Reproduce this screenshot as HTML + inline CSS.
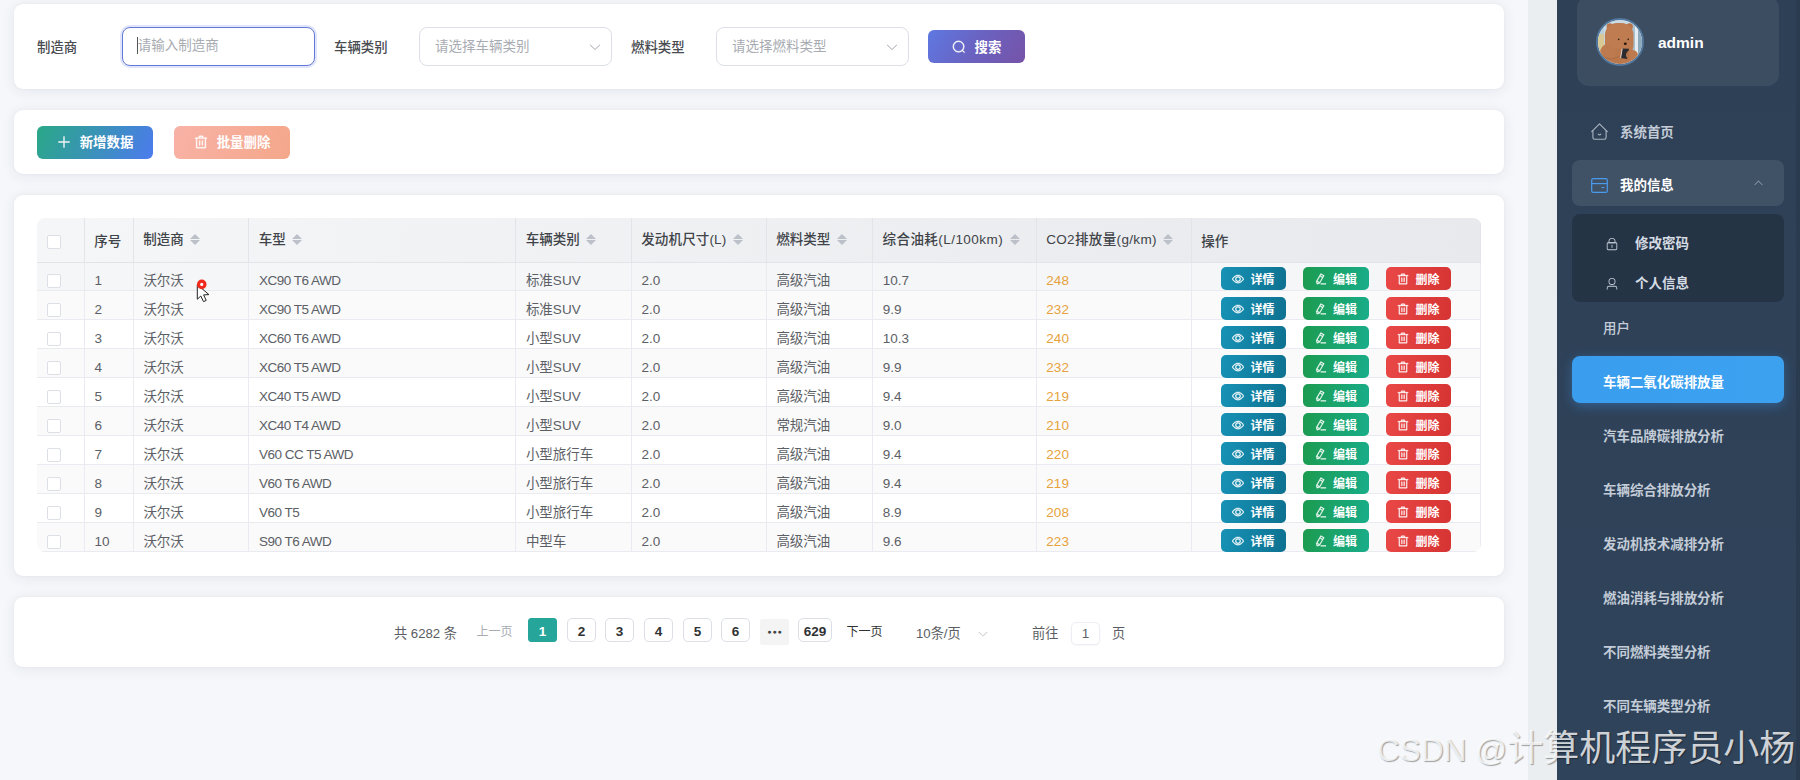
<!DOCTYPE html>
<html lang="zh-CN">
<head>
<meta charset="utf-8">
<title>车辆二氧化碳排放量</title>
<style>
*{box-sizing:border-box;margin:0;padding:0}
html,body{width:1800px;height:780px;overflow:hidden}
body{position:relative;background:#f5f7fa;font-family:"Liberation Sans","Noto Sans CJK SC",sans-serif;font-size:14px;color:#606266}
.card{position:absolute;left:14px;width:1490px;background:#fff;border-radius:9px;box-shadow:0 2px 14px rgba(50,60,90,.085),0 0 3px rgba(50,60,90,.05)}
#c1{top:4px;height:85px}
#c2{top:110px;height:64px}
#c3{top:195px;height:381px}
#c4{top:597px;height:69.5px}
.scroll{position:absolute;left:1528px;top:0;width:29px;height:780px;background:#ebeef0}
/* search form */
.lbl{position:absolute;top:29px;height:30px;line-height:30px;font-weight:500;color:#484b50;font-size:13.4px;white-space:nowrap}
.inp{position:absolute;top:23px;height:39px;width:193px;border:1px solid #dcdfe6;border-radius:8px;background:#fff;line-height:37px;padding-left:15px;color:#a8abb2;font-size:13.5px;white-space:nowrap}
.inp.focus{border:1.3px solid #6479d3;box-shadow:0 0 0 2px rgba(102,126,234,.2);line-height:36.4px;padding-left:14.7px}
.inp .cur{position:absolute;left:14px;top:9px;width:1px;height:17px;background:#555}
.inp svg{position:absolute;right:9px;top:12px;width:14px;height:14px;color:#a8abb2}
.btn{position:absolute;display:flex;align-items:center;justify-content:center;color:#fff;font-weight:700;font-size:13.4px;border-radius:6px;white-space:nowrap;padding-bottom:2px}
.btn svg{width:14px;height:14px;margin-right:9px;position:relative;top:1px;stroke:currentColor;stroke-width:28}
#bs{left:914px;top:26px;width:97px;height:33px;background:linear-gradient(120deg,#5e78e2 0%,#6a62c0 50%,#7653a8 100%)}
#ba{left:23px;top:16px;width:116px;height:32.5px;background:linear-gradient(115deg,#2aa887 0%,#3a92b8 50%,#4c7bee 100%)}
#bd{left:160px;top:16px;width:116px;height:32.5px;background:linear-gradient(115deg,#f8b2a6 0%,#f4a78a 100%)}
/* table */
table{position:absolute;left:23.2px;top:23.2px;width:1443.8px;border-collapse:separate;border-spacing:0;table-layout:fixed;font-size:14px;border-radius:8px;overflow:hidden}
thead tr{height:45px}
thead{background:linear-gradient(100deg,#f5f6f8 0%,#e7e9ec 100%)}
th{text-align:left;font-weight:500;color:#404348;padding:0 0 4px 9.5px;border-right:1px solid #e2e4e9;border-bottom:1px solid #e2e4e9;white-space:nowrap;height:45px;font-size:13.5px}
td{height:29px;padding:5px 0 0 9.7px;border-right:1px solid #e9ebf0;border-bottom:1px solid #e9ebf0;white-space:nowrap;color:#5c5f66;font-size:13.5px;background:#fff}
tr.stripe td{background:#fafafa}
tr.hover td{background:#f5f6f8}
td.co2{color:#e6a23c}
th.ns{padding-bottom:0}
th.c0{padding-bottom:0;padding-left:10px}
th.c0 .cb{top:1.5px}
td.c0{padding-left:10px}
td.c0 .cb{top:2px}
td.l{padding-top:8px}
td.m{letter-spacing:-.5px}
tr.hover td.l{padding-top:7px}
tr.hover td{height:28px;padding-top:4px}
.cb{display:inline-block;width:14px;height:14px;border:1px solid #dcdfe6;border-radius:2px;background:#fff;vertical-align:middle;position:relative;top:1px}
.caret{display:inline-block;position:relative;width:10px;height:14px;vertical-align:middle;margin-left:6.5px;top:-1px}
.caret:before,.caret:after{content:"";position:absolute;left:0;border:5px solid transparent}
.caret:before{border-bottom-color:#bcc0c8;top:-3.5px}
.caret:after{border-top-color:#bcc0c8;top:7.5px}
td.ops{padding:0 0 0 29px !important;font-size:0;vertical-align:bottom}
.ab{display:inline-flex;align-items:center;justify-content:center;width:65.5px;height:23px;border-radius:5px;color:#fff;font-size:12px;font-weight:700;margin-right:17px;vertical-align:middle;position:relative;top:0}
tbody tr:not(.hover) .ab{top:1px}
.ab .bi{width:12px;height:12px;margin-right:6px;stroke:currentColor;stroke-width:30}
.a1{background:linear-gradient(100deg,#1792b6 0%,#0e7190 100%)}
.a2{background:linear-gradient(100deg,#1c9b4f 0%,#19ad8a 100%)}
.a3{background:linear-gradient(100deg,#ea4747 0%,#d63333 100%)}
/* pagination */
.pg{position:absolute;top:2.5px;height:68px;line-height:68px;white-space:nowrap;font-size:13.2px;color:#5a5d63}
.pg.sm{font-size:12px;top:0.5px}
.pn{position:absolute;top:21.3px;height:23.4px;width:29px;border:1px solid #dcdfe6;border-radius:5px;text-align:center;line-height:25.5px;font-weight:700;color:#303133;font-size:13.5px;background:#fff}
.pn.on{background:#26a69a;border-color:#26a69a;color:#fff;border-radius:3px}
.pn.more{background:#f4f4f5;border-color:#f4f4f5;height:25.5px;top:22px;line-height:24px;border-radius:2px;font-size:7px;letter-spacing:1px;color:#444;padding-left:1px}
/* sidebar */
.side{position:absolute;left:1557px;top:0;width:243px;height:780px;background:linear-gradient(180deg,#2e4056 0%,#2f435a 100%);color:#c8d0da;overflow:hidden}
.side .edge{position:absolute;right:0;top:0;width:4px;height:780px;background:#2a3b50}
.user{position:absolute;left:20px;top:-4px;width:202px;height:90px;border-radius:12px;background:rgba(255,255,255,.07)}
.avatar svg{display:block}
.avatar{position:absolute;left:19.3px;top:22.4px;width:48px;height:48px;border-radius:50%;border:2px solid #53789d;overflow:hidden;background:#c9d6df}
.uname{position:absolute;left:81px;top:36px;font-weight:700;color:#fff;font-size:15.5px;line-height:22px}
.mi{position:absolute;left:15px;width:212px;height:46px;border-radius:8px;line-height:46px;font-weight:700;font-size:13.45px;color:#c3ccd7;white-space:nowrap;padding-left:31px}
.mi svg{position:absolute;width:17px;height:17px;top:14px}
.mi.open{background:rgba(255,255,255,.09);color:#fff;line-height:52px}
.mi.act{background:linear-gradient(90deg,#3a9dee 0%,#3ca2f0 100%);color:#fff;box-shadow:0 3px 12px rgba(64,158,255,.35);line-height:54px;height:46.5px}
.sub{position:absolute;left:15px;top:213.5px;width:212px;height:88.2px;border-radius:8px;background:rgba(0,0,0,.2)}
.si{position:absolute;left:0;width:212px;height:40px;line-height:40px;padding-left:63px;font-weight:700;font-size:13.5px;color:#d5dbe3;white-space:nowrap}
.si svg{position:absolute;left:33px;top:13px;width:14px;height:14px;color:#c3ccd7}
.wm{position:absolute;left:1377px;top:725.5px;font-size:36px;line-height:46px;color:rgba(255,255,255,.78);text-shadow:1px 1px 1px rgba(0,0,0,.35);white-space:nowrap;font-family:"Liberation Sans","Noto Sans CJK SC",sans-serif;letter-spacing:0}
</style>
</head>
<body>

<div class="card" id="c1">
  <div class="lbl" style="left:23px">制造商</div>
  <div class="inp focus" style="left:108px"><span class="cur"></span>请输入制造商</div>
  <div class="lbl" style="left:320px">车辆类别</div>
  <div class="inp" style="left:405px">请选择车辆类别<svg viewBox="0 0 1024 1024"><path fill="currentColor" d="M831.872 340.864 512 652.672 192.128 340.864a30.592 30.592 0 0 0-42.752 0 29.120 29.120 0 0 0 0 41.600L489.664 714.240a32 32 0 0 0 44.672 0l340.288-331.712a29.120 29.120 0 0 0 0-41.728 30.592 30.592 0 0 0-42.752 0z"/></svg></div>
  <div class="lbl" style="left:617px">燃料类型</div>
  <div class="inp" style="left:702px">请选择燃料类型<svg viewBox="0 0 1024 1024"><path fill="currentColor" d="M831.872 340.864 512 652.672 192.128 340.864a30.592 30.592 0 0 0-42.752 0 29.120 29.120 0 0 0 0 41.600L489.664 714.240a32 32 0 0 0 44.672 0l340.288-331.712a29.120 29.120 0 0 0 0-41.728 30.592 30.592 0 0 0-42.752 0z"/></svg></div>
  <div class="btn" id="bs"><svg viewBox="0 0 1024 1024"><path fill="currentColor" d="m795.904 750.720 124.992 124.928a32 32 0 0 1-45.248 45.248L750.656 795.904a416 416 0 1 1 45.248-45.248zM480 832a352 352 0 1 0 0-704 352 352 0 0 0 0 704"/></svg>搜索</div>
</div>

<div class="card" id="c2">
  <div class="btn" id="ba"><svg viewBox="0 0 1024 1024"><path fill="currentColor" d="M480 480V128a32 32 0 0 1 64 0v352h352a32 32 0 1 1 0 64H544v352a32 32 0 1 1-64 0V544H128a32 32 0 0 1 0-64z"/></svg>新增数据</div>
  <div class="btn" id="bd"><svg class="bi" viewBox="0 0 1024 1024"><path fill="currentColor" d="M160 256H96a32 32 0 0 1 0-64h256V95.936a32 32 0 0 1 32-32h256a32 32 0 0 1 32 32V192h256a32 32 0 1 1 0 64h-64v672a32 32 0 0 1-32 32H192a32 32 0 0 1-32-32zm448-64v-64H416v64zM224 896h576V256H224zm192-128a32 32 0 0 1-32-32V416a32 32 0 0 1 64 0v320a32 32 0 0 1-32 32m192 0a32 32 0 0 1-32-32V416a32 32 0 0 1 64 0v320a32 32 0 0 1-32 32"/></svg>批量删除</div>
</div>

<div class="card" id="c3">
<table>
<colgroup><col style="width:47.5px"><col style="width:49px"><col style="width:115.5px"><col style="width:267px"><col style="width:115.5px"><col style="width:135px"><col style="width:106.3px"><col style="width:163.7px"><col style="width:155px"><col style="width:289.3px"></colgroup>
<thead><tr>
<th class="c0"><span class="cb"></span></th><th class="ns">序号</th><th>制造商<span class="caret"></span></th><th>车型<span class="caret"></span></th><th>车辆类别<span class="caret"></span></th><th style="letter-spacing:.15px">发动机尺寸(L)<span class="caret"></span></th><th>燃料类型<span class="caret"></span></th><th style="letter-spacing:.45px">综合油耗(L/100km)<span class="caret"></span></th><th style="letter-spacing:.35px">CO2排放量(g/km)<span class="caret"></span></th><th class="ns">操作</th>
</tr></thead>
<tbody>
<tr class="hover"><td class="c0"><span class="cb"></span></td><td class="l">1</td><td>沃尔沃</td><td class="l m">XC90 T6 AWD</td><td>标准SUV</td><td class="l">2.0</td><td>高级汽油</td><td class="l">10.7</td><td class="co2 l">248</td><td class="ops"><span class="ab a1"><svg class="bi" viewBox="0 0 1024 1024"><path fill="currentColor" d="M512 160c320 0 512 352 512 352S832 864 512 864 0 512 0 512s192-352 512-352m0 64c-225.280 0-384.128 208.064-436.800 288 52.608 79.872 211.456 288 436.800 288 225.280 0 384.128-208.064 436.800-288-52.608-79.872-211.456-288-436.800-288m0 64a224 224 0 1 1 0 448 224 224 0 0 1 0-448m0 64a160.192 160.192 0 0 0-160 160c0 88.192 71.744 160 160 160s160-71.808 160-160-71.744-160-160-160"/></svg>详情</span><span class="ab a2"><svg class="bi" viewBox="0 0 1024 1024"><path fill="currentColor" d="m199.040 672.640 193.984 112 224-387.968-193.920-112-224 388.032zm-23.872 60.160 32.896 148.288 144.896-45.696zM455.040 229.248l193.920 112 56.704-98.112-193.984-112-56.640 98.112zM104.320 708.800l384-665.024 304.768 175.936L409.152 884.800h.064l-248.448 78.336zm384 254.272v-64h448v64z"/></svg>编辑</span><span class="ab a3"><svg class="bi" viewBox="0 0 1024 1024"><path fill="currentColor" d="M160 256H96a32 32 0 0 1 0-64h256V95.936a32 32 0 0 1 32-32h256a32 32 0 0 1 32 32V192h256a32 32 0 1 1 0 64h-64v672a32 32 0 0 1-32 32H192a32 32 0 0 1-32-32zm448-64v-64H416v64zM224 896h576V256H224zm192-128a32 32 0 0 1-32-32V416a32 32 0 0 1 64 0v320a32 32 0 0 1-32 32m192 0a32 32 0 0 1-32-32V416a32 32 0 0 1 64 0v320a32 32 0 0 1-32 32"/></svg>删除</span></td></tr>
<tr class="stripe"><td class="c0"><span class="cb"></span></td><td class="l">2</td><td>沃尔沃</td><td class="l m">XC90 T5 AWD</td><td>标准SUV</td><td class="l">2.0</td><td>高级汽油</td><td class="l">9.9</td><td class="co2 l">232</td><td class="ops"><span class="ab a1"><svg class="bi" viewBox="0 0 1024 1024"><path fill="currentColor" d="M512 160c320 0 512 352 512 352S832 864 512 864 0 512 0 512s192-352 512-352m0 64c-225.280 0-384.128 208.064-436.800 288 52.608 79.872 211.456 288 436.800 288 225.280 0 384.128-208.064 436.800-288-52.608-79.872-211.456-288-436.800-288m0 64a224 224 0 1 1 0 448 224 224 0 0 1 0-448m0 64a160.192 160.192 0 0 0-160 160c0 88.192 71.744 160 160 160s160-71.808 160-160-71.744-160-160-160"/></svg>详情</span><span class="ab a2"><svg class="bi" viewBox="0 0 1024 1024"><path fill="currentColor" d="m199.040 672.640 193.984 112 224-387.968-193.920-112-224 388.032zm-23.872 60.160 32.896 148.288 144.896-45.696zM455.040 229.248l193.920 112 56.704-98.112-193.984-112-56.640 98.112zM104.320 708.800l384-665.024 304.768 175.936L409.152 884.800h.064l-248.448 78.336zm384 254.272v-64h448v64z"/></svg>编辑</span><span class="ab a3"><svg class="bi" viewBox="0 0 1024 1024"><path fill="currentColor" d="M160 256H96a32 32 0 0 1 0-64h256V95.936a32 32 0 0 1 32-32h256a32 32 0 0 1 32 32V192h256a32 32 0 1 1 0 64h-64v672a32 32 0 0 1-32 32H192a32 32 0 0 1-32-32zm448-64v-64H416v64zM224 896h576V256H224zm192-128a32 32 0 0 1-32-32V416a32 32 0 0 1 64 0v320a32 32 0 0 1-32 32m192 0a32 32 0 0 1-32-32V416a32 32 0 0 1 64 0v320a32 32 0 0 1-32 32"/></svg>删除</span></td></tr>
<tr class=""><td class="c0"><span class="cb"></span></td><td class="l">3</td><td>沃尔沃</td><td class="l m">XC60 T6 AWD</td><td>小型SUV</td><td class="l">2.0</td><td>高级汽油</td><td class="l">10.3</td><td class="co2 l">240</td><td class="ops"><span class="ab a1"><svg class="bi" viewBox="0 0 1024 1024"><path fill="currentColor" d="M512 160c320 0 512 352 512 352S832 864 512 864 0 512 0 512s192-352 512-352m0 64c-225.280 0-384.128 208.064-436.800 288 52.608 79.872 211.456 288 436.800 288 225.280 0 384.128-208.064 436.800-288-52.608-79.872-211.456-288-436.800-288m0 64a224 224 0 1 1 0 448 224 224 0 0 1 0-448m0 64a160.192 160.192 0 0 0-160 160c0 88.192 71.744 160 160 160s160-71.808 160-160-71.744-160-160-160"/></svg>详情</span><span class="ab a2"><svg class="bi" viewBox="0 0 1024 1024"><path fill="currentColor" d="m199.040 672.640 193.984 112 224-387.968-193.920-112-224 388.032zm-23.872 60.160 32.896 148.288 144.896-45.696zM455.040 229.248l193.920 112 56.704-98.112-193.984-112-56.640 98.112zM104.320 708.800l384-665.024 304.768 175.936L409.152 884.800h.064l-248.448 78.336zm384 254.272v-64h448v64z"/></svg>编辑</span><span class="ab a3"><svg class="bi" viewBox="0 0 1024 1024"><path fill="currentColor" d="M160 256H96a32 32 0 0 1 0-64h256V95.936a32 32 0 0 1 32-32h256a32 32 0 0 1 32 32V192h256a32 32 0 1 1 0 64h-64v672a32 32 0 0 1-32 32H192a32 32 0 0 1-32-32zm448-64v-64H416v64zM224 896h576V256H224zm192-128a32 32 0 0 1-32-32V416a32 32 0 0 1 64 0v320a32 32 0 0 1-32 32m192 0a32 32 0 0 1-32-32V416a32 32 0 0 1 64 0v320a32 32 0 0 1-32 32"/></svg>删除</span></td></tr>
<tr class="stripe"><td class="c0"><span class="cb"></span></td><td class="l">4</td><td>沃尔沃</td><td class="l m">XC60 T5 AWD</td><td>小型SUV</td><td class="l">2.0</td><td>高级汽油</td><td class="l">9.9</td><td class="co2 l">232</td><td class="ops"><span class="ab a1"><svg class="bi" viewBox="0 0 1024 1024"><path fill="currentColor" d="M512 160c320 0 512 352 512 352S832 864 512 864 0 512 0 512s192-352 512-352m0 64c-225.280 0-384.128 208.064-436.800 288 52.608 79.872 211.456 288 436.800 288 225.280 0 384.128-208.064 436.800-288-52.608-79.872-211.456-288-436.800-288m0 64a224 224 0 1 1 0 448 224 224 0 0 1 0-448m0 64a160.192 160.192 0 0 0-160 160c0 88.192 71.744 160 160 160s160-71.808 160-160-71.744-160-160-160"/></svg>详情</span><span class="ab a2"><svg class="bi" viewBox="0 0 1024 1024"><path fill="currentColor" d="m199.040 672.640 193.984 112 224-387.968-193.920-112-224 388.032zm-23.872 60.160 32.896 148.288 144.896-45.696zM455.040 229.248l193.920 112 56.704-98.112-193.984-112-56.640 98.112zM104.320 708.800l384-665.024 304.768 175.936L409.152 884.800h.064l-248.448 78.336zm384 254.272v-64h448v64z"/></svg>编辑</span><span class="ab a3"><svg class="bi" viewBox="0 0 1024 1024"><path fill="currentColor" d="M160 256H96a32 32 0 0 1 0-64h256V95.936a32 32 0 0 1 32-32h256a32 32 0 0 1 32 32V192h256a32 32 0 1 1 0 64h-64v672a32 32 0 0 1-32 32H192a32 32 0 0 1-32-32zm448-64v-64H416v64zM224 896h576V256H224zm192-128a32 32 0 0 1-32-32V416a32 32 0 0 1 64 0v320a32 32 0 0 1-32 32m192 0a32 32 0 0 1-32-32V416a32 32 0 0 1 64 0v320a32 32 0 0 1-32 32"/></svg>删除</span></td></tr>
<tr class=""><td class="c0"><span class="cb"></span></td><td class="l">5</td><td>沃尔沃</td><td class="l m">XC40 T5 AWD</td><td>小型SUV</td><td class="l">2.0</td><td>高级汽油</td><td class="l">9.4</td><td class="co2 l">219</td><td class="ops"><span class="ab a1"><svg class="bi" viewBox="0 0 1024 1024"><path fill="currentColor" d="M512 160c320 0 512 352 512 352S832 864 512 864 0 512 0 512s192-352 512-352m0 64c-225.280 0-384.128 208.064-436.800 288 52.608 79.872 211.456 288 436.800 288 225.280 0 384.128-208.064 436.800-288-52.608-79.872-211.456-288-436.800-288m0 64a224 224 0 1 1 0 448 224 224 0 0 1 0-448m0 64a160.192 160.192 0 0 0-160 160c0 88.192 71.744 160 160 160s160-71.808 160-160-71.744-160-160-160"/></svg>详情</span><span class="ab a2"><svg class="bi" viewBox="0 0 1024 1024"><path fill="currentColor" d="m199.040 672.640 193.984 112 224-387.968-193.920-112-224 388.032zm-23.872 60.160 32.896 148.288 144.896-45.696zM455.040 229.248l193.920 112 56.704-98.112-193.984-112-56.640 98.112zM104.320 708.800l384-665.024 304.768 175.936L409.152 884.800h.064l-248.448 78.336zm384 254.272v-64h448v64z"/></svg>编辑</span><span class="ab a3"><svg class="bi" viewBox="0 0 1024 1024"><path fill="currentColor" d="M160 256H96a32 32 0 0 1 0-64h256V95.936a32 32 0 0 1 32-32h256a32 32 0 0 1 32 32V192h256a32 32 0 1 1 0 64h-64v672a32 32 0 0 1-32 32H192a32 32 0 0 1-32-32zm448-64v-64H416v64zM224 896h576V256H224zm192-128a32 32 0 0 1-32-32V416a32 32 0 0 1 64 0v320a32 32 0 0 1-32 32m192 0a32 32 0 0 1-32-32V416a32 32 0 0 1 64 0v320a32 32 0 0 1-32 32"/></svg>删除</span></td></tr>
<tr class="stripe"><td class="c0"><span class="cb"></span></td><td class="l">6</td><td>沃尔沃</td><td class="l m">XC40 T4 AWD</td><td>小型SUV</td><td class="l">2.0</td><td>常规汽油</td><td class="l">9.0</td><td class="co2 l">210</td><td class="ops"><span class="ab a1"><svg class="bi" viewBox="0 0 1024 1024"><path fill="currentColor" d="M512 160c320 0 512 352 512 352S832 864 512 864 0 512 0 512s192-352 512-352m0 64c-225.280 0-384.128 208.064-436.800 288 52.608 79.872 211.456 288 436.800 288 225.280 0 384.128-208.064 436.800-288-52.608-79.872-211.456-288-436.800-288m0 64a224 224 0 1 1 0 448 224 224 0 0 1 0-448m0 64a160.192 160.192 0 0 0-160 160c0 88.192 71.744 160 160 160s160-71.808 160-160-71.744-160-160-160"/></svg>详情</span><span class="ab a2"><svg class="bi" viewBox="0 0 1024 1024"><path fill="currentColor" d="m199.040 672.640 193.984 112 224-387.968-193.920-112-224 388.032zm-23.872 60.160 32.896 148.288 144.896-45.696zM455.040 229.248l193.920 112 56.704-98.112-193.984-112-56.640 98.112zM104.320 708.800l384-665.024 304.768 175.936L409.152 884.800h.064l-248.448 78.336zm384 254.272v-64h448v64z"/></svg>编辑</span><span class="ab a3"><svg class="bi" viewBox="0 0 1024 1024"><path fill="currentColor" d="M160 256H96a32 32 0 0 1 0-64h256V95.936a32 32 0 0 1 32-32h256a32 32 0 0 1 32 32V192h256a32 32 0 1 1 0 64h-64v672a32 32 0 0 1-32 32H192a32 32 0 0 1-32-32zm448-64v-64H416v64zM224 896h576V256H224zm192-128a32 32 0 0 1-32-32V416a32 32 0 0 1 64 0v320a32 32 0 0 1-32 32m192 0a32 32 0 0 1-32-32V416a32 32 0 0 1 64 0v320a32 32 0 0 1-32 32"/></svg>删除</span></td></tr>
<tr class=""><td class="c0"><span class="cb"></span></td><td class="l">7</td><td>沃尔沃</td><td class="l m">V60 CC T5 AWD</td><td>小型旅行车</td><td class="l">2.0</td><td>高级汽油</td><td class="l">9.4</td><td class="co2 l">220</td><td class="ops"><span class="ab a1"><svg class="bi" viewBox="0 0 1024 1024"><path fill="currentColor" d="M512 160c320 0 512 352 512 352S832 864 512 864 0 512 0 512s192-352 512-352m0 64c-225.280 0-384.128 208.064-436.800 288 52.608 79.872 211.456 288 436.800 288 225.280 0 384.128-208.064 436.800-288-52.608-79.872-211.456-288-436.800-288m0 64a224 224 0 1 1 0 448 224 224 0 0 1 0-448m0 64a160.192 160.192 0 0 0-160 160c0 88.192 71.744 160 160 160s160-71.808 160-160-71.744-160-160-160"/></svg>详情</span><span class="ab a2"><svg class="bi" viewBox="0 0 1024 1024"><path fill="currentColor" d="m199.040 672.640 193.984 112 224-387.968-193.920-112-224 388.032zm-23.872 60.160 32.896 148.288 144.896-45.696zM455.040 229.248l193.920 112 56.704-98.112-193.984-112-56.640 98.112zM104.320 708.800l384-665.024 304.768 175.936L409.152 884.800h.064l-248.448 78.336zm384 254.272v-64h448v64z"/></svg>编辑</span><span class="ab a3"><svg class="bi" viewBox="0 0 1024 1024"><path fill="currentColor" d="M160 256H96a32 32 0 0 1 0-64h256V95.936a32 32 0 0 1 32-32h256a32 32 0 0 1 32 32V192h256a32 32 0 1 1 0 64h-64v672a32 32 0 0 1-32 32H192a32 32 0 0 1-32-32zm448-64v-64H416v64zM224 896h576V256H224zm192-128a32 32 0 0 1-32-32V416a32 32 0 0 1 64 0v320a32 32 0 0 1-32 32m192 0a32 32 0 0 1-32-32V416a32 32 0 0 1 64 0v320a32 32 0 0 1-32 32"/></svg>删除</span></td></tr>
<tr class="stripe"><td class="c0"><span class="cb"></span></td><td class="l">8</td><td>沃尔沃</td><td class="l m">V60 T6 AWD</td><td>小型旅行车</td><td class="l">2.0</td><td>高级汽油</td><td class="l">9.4</td><td class="co2 l">219</td><td class="ops"><span class="ab a1"><svg class="bi" viewBox="0 0 1024 1024"><path fill="currentColor" d="M512 160c320 0 512 352 512 352S832 864 512 864 0 512 0 512s192-352 512-352m0 64c-225.280 0-384.128 208.064-436.800 288 52.608 79.872 211.456 288 436.800 288 225.280 0 384.128-208.064 436.800-288-52.608-79.872-211.456-288-436.800-288m0 64a224 224 0 1 1 0 448 224 224 0 0 1 0-448m0 64a160.192 160.192 0 0 0-160 160c0 88.192 71.744 160 160 160s160-71.808 160-160-71.744-160-160-160"/></svg>详情</span><span class="ab a2"><svg class="bi" viewBox="0 0 1024 1024"><path fill="currentColor" d="m199.040 672.640 193.984 112 224-387.968-193.920-112-224 388.032zm-23.872 60.160 32.896 148.288 144.896-45.696zM455.040 229.248l193.920 112 56.704-98.112-193.984-112-56.640 98.112zM104.320 708.800l384-665.024 304.768 175.936L409.152 884.800h.064l-248.448 78.336zm384 254.272v-64h448v64z"/></svg>编辑</span><span class="ab a3"><svg class="bi" viewBox="0 0 1024 1024"><path fill="currentColor" d="M160 256H96a32 32 0 0 1 0-64h256V95.936a32 32 0 0 1 32-32h256a32 32 0 0 1 32 32V192h256a32 32 0 1 1 0 64h-64v672a32 32 0 0 1-32 32H192a32 32 0 0 1-32-32zm448-64v-64H416v64zM224 896h576V256H224zm192-128a32 32 0 0 1-32-32V416a32 32 0 0 1 64 0v320a32 32 0 0 1-32 32m192 0a32 32 0 0 1-32-32V416a32 32 0 0 1 64 0v320a32 32 0 0 1-32 32"/></svg>删除</span></td></tr>
<tr class=""><td class="c0"><span class="cb"></span></td><td class="l">9</td><td>沃尔沃</td><td class="l m">V60 T5</td><td>小型旅行车</td><td class="l">2.0</td><td>高级汽油</td><td class="l">8.9</td><td class="co2 l">208</td><td class="ops"><span class="ab a1"><svg class="bi" viewBox="0 0 1024 1024"><path fill="currentColor" d="M512 160c320 0 512 352 512 352S832 864 512 864 0 512 0 512s192-352 512-352m0 64c-225.280 0-384.128 208.064-436.800 288 52.608 79.872 211.456 288 436.800 288 225.280 0 384.128-208.064 436.800-288-52.608-79.872-211.456-288-436.800-288m0 64a224 224 0 1 1 0 448 224 224 0 0 1 0-448m0 64a160.192 160.192 0 0 0-160 160c0 88.192 71.744 160 160 160s160-71.808 160-160-71.744-160-160-160"/></svg>详情</span><span class="ab a2"><svg class="bi" viewBox="0 0 1024 1024"><path fill="currentColor" d="m199.040 672.640 193.984 112 224-387.968-193.920-112-224 388.032zm-23.872 60.160 32.896 148.288 144.896-45.696zM455.040 229.248l193.920 112 56.704-98.112-193.984-112-56.640 98.112zM104.320 708.800l384-665.024 304.768 175.936L409.152 884.800h.064l-248.448 78.336zm384 254.272v-64h448v64z"/></svg>编辑</span><span class="ab a3"><svg class="bi" viewBox="0 0 1024 1024"><path fill="currentColor" d="M160 256H96a32 32 0 0 1 0-64h256V95.936a32 32 0 0 1 32-32h256a32 32 0 0 1 32 32V192h256a32 32 0 1 1 0 64h-64v672a32 32 0 0 1-32 32H192a32 32 0 0 1-32-32zm448-64v-64H416v64zM224 896h576V256H224zm192-128a32 32 0 0 1-32-32V416a32 32 0 0 1 64 0v320a32 32 0 0 1-32 32m192 0a32 32 0 0 1-32-32V416a32 32 0 0 1 64 0v320a32 32 0 0 1-32 32"/></svg>删除</span></td></tr>
<tr class="stripe"><td class="c0"><span class="cb"></span></td><td class="l">10</td><td>沃尔沃</td><td class="l m">S90 T6 AWD</td><td>中型车</td><td class="l">2.0</td><td>高级汽油</td><td class="l">9.6</td><td class="co2 l">223</td><td class="ops"><span class="ab a1"><svg class="bi" viewBox="0 0 1024 1024"><path fill="currentColor" d="M512 160c320 0 512 352 512 352S832 864 512 864 0 512 0 512s192-352 512-352m0 64c-225.280 0-384.128 208.064-436.800 288 52.608 79.872 211.456 288 436.800 288 225.280 0 384.128-208.064 436.800-288-52.608-79.872-211.456-288-436.800-288m0 64a224 224 0 1 1 0 448 224 224 0 0 1 0-448m0 64a160.192 160.192 0 0 0-160 160c0 88.192 71.744 160 160 160s160-71.808 160-160-71.744-160-160-160"/></svg>详情</span><span class="ab a2"><svg class="bi" viewBox="0 0 1024 1024"><path fill="currentColor" d="m199.040 672.640 193.984 112 224-387.968-193.920-112-224 388.032zm-23.872 60.160 32.896 148.288 144.896-45.696zM455.040 229.248l193.920 112 56.704-98.112-193.984-112-56.640 98.112zM104.320 708.800l384-665.024 304.768 175.936L409.152 884.800h.064l-248.448 78.336zm384 254.272v-64h448v64z"/></svg>编辑</span><span class="ab a3"><svg class="bi" viewBox="0 0 1024 1024"><path fill="currentColor" d="M160 256H96a32 32 0 0 1 0-64h256V95.936a32 32 0 0 1 32-32h256a32 32 0 0 1 32 32V192h256a32 32 0 1 1 0 64h-64v672a32 32 0 0 1-32 32H192a32 32 0 0 1-32-32zm448-64v-64H416v64zM224 896h576V256H224zm192-128a32 32 0 0 1-32-32V416a32 32 0 0 1 64 0v320a32 32 0 0 1-32 32m192 0a32 32 0 0 1-32-32V416a32 32 0 0 1 64 0v320a32 32 0 0 1-32 32"/></svg>删除</span></td></tr>
</tbody>
</table>
</div>

<div class="card" id="c4">
  <span class="pg" style="left:380px">共 6282 条</span>
  <span class="pg sm" style="left:462.5px;color:#a8abb2">上一页</span>
  <span class="pn on" style="left:514px">1</span>
  <span class="pn" style="left:553px">2</span>
  <span class="pn" style="left:591px">3</span>
  <span class="pn" style="left:630px">4</span>
  <span class="pn" style="left:669px">5</span>
  <span class="pn" style="left:707px">6</span>
  <span class="pn more" style="left:746px">●●●</span>
  <span class="pn" style="left:784.2px;width:33.5px">629</span>
  <span class="pg sm" style="left:832.5px;color:#303133">下一页</span>
  <span class="pg" style="left:902px">10条/页</span>
  <svg style="position:absolute;left:963px;top:30.5px;width:12px;height:12px;color:#b8bbc2" viewBox="0 0 1024 1024"><path fill="currentColor" d="M831.872 340.864 512 652.672 192.128 340.864a30.592 30.592 0 0 0-42.752 0 29.120 29.120 0 0 0 0 41.600L489.664 714.240a32 32 0 0 0 44.672 0l340.288-331.712a29.120 29.120 0 0 0 0-41.728 30.592 30.592 0 0 0-42.752 0z"/></svg>
  <span class="pg" style="left:1018px">前往</span>
  <span class="pn" style="left:1057px;top:24.5px;width:29px;font-weight:400;color:#606266;border-color:#eceef3;box-shadow:0 1px 2px rgba(0,0,0,.04);line-height:22px">1</span>
  <span class="pg" style="left:1098px">页</span>
</div>

<svg style="position:absolute;left:196px;top:279px;width:16px;height:24px;overflow:visible" viewBox="0 0 16 24"><path d="M1.3 5.6 L1.3 20.2 L4.8 17 L7.5 22.6 L10.2 21.4 L7.6 15.9 L12.9 15.6 Z" fill="#fff" stroke="#222" stroke-width="1" stroke-linejoin="round"/><circle cx="5.75" cy="5.4" r="3.2" fill="#fff" stroke="#f02a1c" stroke-width="3.2"/></svg>

<div class="scroll"></div>

<div class="side">
  <div class="edge"></div>
  <div class="user">
    <div class="avatar">
      <svg viewBox="0 0 44 44" width="44" height="44">
        <rect width="44" height="44" fill="#c9dbe6"/>
        <rect x="0" y="14" width="6" height="20" fill="#d9c893"/>
        <rect x="0" y="0" width="6" height="14" fill="#b9cfdc"/>
        <rect x="33" y="0" width="4" height="44" fill="#a9c0cf"/>
        <rect x="37" y="0" width="3" height="44" fill="#e4ecf1"/>
        <rect x="40" y="0" width="4" height="44" fill="#8da7bb"/>
        <circle cx="11.8" cy="6.4" r="3.2" fill="#b8744a"/>
        <circle cx="31.6" cy="6.4" r="3.2" fill="#b8744a"/>
        <rect x="6.9" y="3.1" width="28.6" height="34" rx="12" fill="#bf7c50"/>
        <ellipse cx="21" cy="41" rx="19.5" ry="13" fill="#bb784c"/>
        <ellipse cx="9.5" cy="33" rx="7.5" ry="9" fill="#bd7a4e"/>
        <path d="M5 36 Q12 42 22 36" fill="none" stroke="#a56740" stroke-width=".7"/>
        <circle cx="20.7" cy="19.3" r=".85" fill="#3a2418"/>
        <circle cx="30.2" cy="19.3" r=".85" fill="#3a2418"/>
        <ellipse cx="27.3" cy="23.8" rx="1.5" ry="1.2" fill="#2a1810"/>
        <path d="M24.2 28.5 L31 28.8 L29.2 39 L22.6 38 Z" fill="#2c2b30"/>
        <path d="M24.2 28.5 L22.6 38" stroke="#f0e6e0" stroke-width=".9"/>
        <ellipse cx="34" cy="35" rx="6" ry="5" fill="#bd7a4e"/>
        <path d="M29.5 33 Q31 36 29.5 39" fill="none" stroke="#a56740" stroke-width=".6"/>
      </svg>
    </div>
    <div class="uname">admin</div>
  </div>

  <div class="mi" style="top:109.5px;padding-left:63px;font-weight:700;color:#c2cbd6;left:0"><svg style="left:34px;top:13.5px;width:17px;height:17px" viewBox="0 0 17 17" fill="none" stroke="#a9b4c1" stroke-width="1.1" stroke-linecap="round" stroke-linejoin="round"><path d="M0.7 8.6 L8.5 0.9 L16.3 8.6"/><path d="M1.9 7.6 V14.6 Q1.9 16.3 3.6 16.3 H13.4 Q15.1 16.3 15.1 14.6 V7.6"/><path d="M7.2 11.2 Q8.5 12.6 9.8 11.2"/></svg>系统首页</div>

  <div class="mi open" style="top:160px;padding-left:48px"><svg style="left:19px;top:17.5px;width:17px;height:15px" viewBox="0 0 17 15" fill="none" stroke="#4a9bee" stroke-width="1.2" stroke-linejoin="round"><rect x="0.7" y="0.7" width="15.6" height="13.6" rx="1.6"/><path d="M0.7 5.6 H16.3"/><path d="M10.4 9.6 H13.4" stroke-width="1.1"/></svg>我的信息<svg style="left:181px;top:17px;width:11px;height:11px;color:#9aa7b6" viewBox="0 0 1024 1024"><path fill="currentColor" d="m488.832 344.320-339.840 356.672a32 32 0 0 0 0 44.160l.384.384a29.440 29.440 0 0 0 42.688 0l320-335.872 319.872 335.872a29.440 29.440 0 0 0 42.688 0l.384-.384a32 32 0 0 0 0-44.160L535.168 344.320a32 32 0 0 0-46.336 0"/></svg></div>

  <div class="sub">
    <div class="si" style="top:10px"><svg viewBox="0 0 1024 1024"><path fill="currentColor" d="M224 448a32 32 0 0 0-32 32v384a32 32 0 0 0 32 32h576a32 32 0 0 0 32-32V480a32 32 0 0 0-32-32zm0-64h576a96 96 0 0 1 96 96v384a96 96 0 0 1-96 96H224a96 96 0 0 1-96-96V480a96 96 0 0 1 96-96"/><path fill="currentColor" d="M512 544a32 32 0 0 1 32 32v192a32 32 0 1 1-64 0V576a32 32 0 0 1 32-32m192-160v-64a192 192 0 1 0-384 0v64zM512 64a256 256 0 0 1 256 256v128H256V320A256 256 0 0 1 512 64"/></svg>修改密码</div>
    <div class="si" style="top:50.2px"><svg viewBox="0 0 1024 1024"><path fill="currentColor" d="M512 512a192 192 0 1 0 0-384 192 192 0 0 0 0 384m0 64a256 256 0 1 1 0-512 256 256 0 0 1 0 512m320 320v-96a96 96 0 0 0-96-96H288a96 96 0 0 0-96 96v96a32 32 0 1 1-64 0v-96a160 160 0 0 1 160-160h448a160 160 0 0 1 160 160v96a32 32 0 1 1-64 0"/></svg>个人信息</div>
  </div>

  <div class="mi" style="top:306px;font-weight:500">用户</div>
  <div class="mi act" style="top:356px">车辆二氧化碳排放量</div>
  <div class="mi" style="top:414px">汽车品牌碳排放分析</div>
  <div class="mi" style="top:468px">车辆综合排放分析</div>
  <div class="mi" style="top:522px">发动机技术减排分析</div>
  <div class="mi" style="top:576px">燃油消耗与排放分析</div>
  <div class="mi" style="top:630px">不同燃料类型分析</div>
  <div class="mi" style="top:684px">不同车辆类型分析</div>
</div>

<div class="wm"><span style="font-size:31.3px;letter-spacing:.2px">CSDN @</span>计算机程序员小杨</div>

</body>
</html>
